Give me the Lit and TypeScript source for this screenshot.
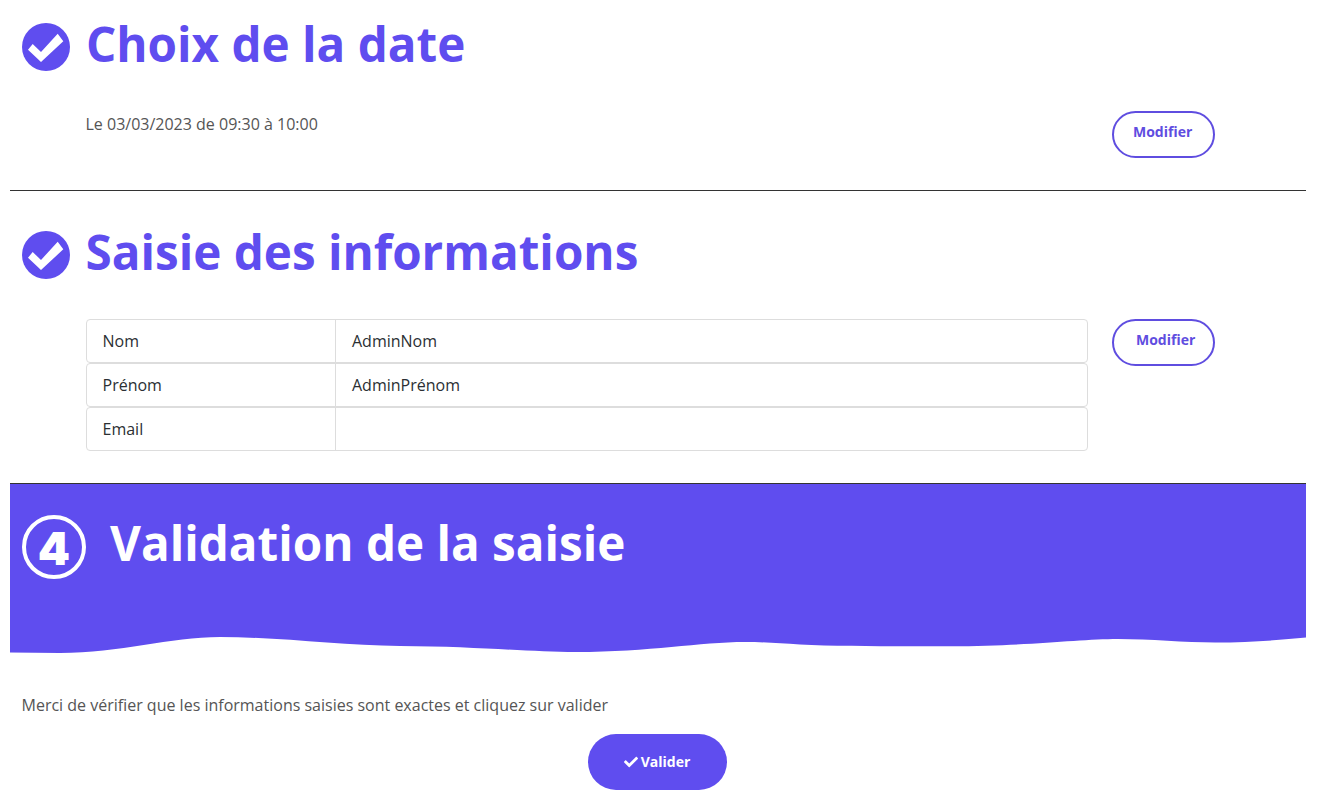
import { LitElement, html, css, svg } from "lit";
import { customElement } from "lit/decorators.js";

const circleCheck = svg`<circle cx="24" cy="24" r="24" fill="#5f4def"/><path fill="#fff" d="M6 26.700L10.700 21L19 29L35.700 10.700L41.300 18.300L19 39Z"/>`;
const check = svg`<path d="M173.898 439.404l-166.4-166.4c-9.997-9.997-9.997-26.206 0-36.204l36.203-36.204c9.997-9.998 26.207-9.998 36.204 0L192 312.69 432.095 72.596c9.997-9.997 26.207-9.997 36.204 0l36.203 36.204c9.997 9.997 9.997 26.206 0 36.204l-294.4 294.401c-9.998 9.997-26.207 9.997-36.204-.001z"/>`;

@customElement("app-root")
export class AppRoot extends LitElement {
  static styles = css`
    :host {
      display: block;
      font-family: "Open Sans", sans-serif;
      color: #2b2f33;
      padding: 0 13px 0 10px;
      background: #fff;
    }
    * { box-sizing: border-box; }
    .head {
      display: flex;
      align-items: flex-start;
      padding-left: 12px;
      gap: 16px;
      color: #5f4def;
    }
    .head svg { width: 48px; height: 48px; display: block; flex: none; }
    h1 { margin: 0; font-size: 47.6px; line-height: 56px; font-weight: 700; }
    .s1 { height: 191px; border-bottom: 1px solid #333; padding-top: 23px; }
    .s1 h1 { margin-top: -7px; }
    .s2 { height: 293px; border-bottom: 1px solid #333; padding-top: 40px; }
    .s2 .head { gap: 15.5px; }
    .s2 h1 { margin-top: -7px; }
    .body {
      display: grid;
      grid-template-columns: 1002px 103px;
      gap: 24px;
      padding-left: 76px;
      align-items: start;
    }
    .s1 .body { margin-top: 40px; }
    .s2 .body { margin-top: 39px; }
    .date { font-size: 16px; line-height: 24px; color: #555; margin-left: -0.5px; }
    .btn {
      display: block;
      width: 103px;
      height: 47px;
      border: 2px solid #5f4de0;
      border-radius: 24px;
      background: #fff;
      color: #5f4de0;
      font: 700 14px/20px "Open Sans", sans-serif;
      padding: 0 0 5px 19px;
      text-align: left;
    }
    .s1 .btn { margin-top: -1px; }
    .btn.second { padding-left: 22px; }
    .rows { display: flex; flex-direction: column; }
    .row {
      display: grid;
      grid-template-columns: 249px 1fr;
      height: 44px;
      border: 1px solid #ddd;
      border-radius: 4px;
      font-size: 16px;
      line-height: 42px;
    }
    .row div { padding-left: 16px; }
    .row div:first-child { border-right: 1px solid #ddd; padding-left: 15.5px; }
    .banner { background: #5f4def; height: 152px; padding: 31px 0 0 12px; color: #fff; display: flex; align-items: flex-start; gap: 24px; }
    .ring {
      width: 64px; height: 64px; flex: none;
      border: 4px solid #fff; border-radius: 50%;
      display: flex; align-items: center; justify-content: center;
      font-family: Inter, sans-serif;
      font-size: 46px; font-weight: 900; line-height: 1;
      padding-top: 2px;
    }
    .banner h1 { line-height: 58px; margin-top: -1px; }
    .wave { display: block; width: 100%; height: 17px; fill: #5f4def; }
    .msg { margin: 40px 0 0 11.5px; font-size: 16px; line-height: 24px; color: #555; }
    .center { display: flex; justify-content: center; margin-top: 17px; padding-right: 2px; }
    .go {
      width: 139px; height: 56px; border: 0; border-radius: 28px;
      background: #5f4def; color: #fff;
      font: 700 14px/20px "Open Sans", sans-serif;
      display: flex; align-items: center; justify-content: center; gap: 3px;
      padding: 0;
    }
    .go svg { width: 14px; height: 14px; fill: #fff; display: block; }
  `;

  render() {
    return html`
      <section class="s1">
        <div class="head">
          <svg viewBox="0 0 48 48">${circleCheck}</svg>
          <h1>Choix de la date</h1>
        </div>
        <div class="body">
          <div class="date">Le 03/03/2023 de 09:30 à 10:00</div>
          <button class="btn">Modifier</button>
        </div>
      </section>
      <section class="s2">
        <div class="head">
          <svg viewBox="0 0 48 48">${circleCheck}</svg>
          <h1>Saisie des informations</h1>
        </div>
        <div class="body">
          <div class="rows">
            <div class="row"><div>Nom</div><div>AdminNom</div></div>
            <div class="row"><div>Prénom</div><div>AdminPrénom</div></div>
            <div class="row"><div>Email</div><div></div></div>
          </div>
          <button class="btn second">Modifier</button>
        </div>
      </section>
      <section class="banner">
        <div class="ring">4</div>
        <h1>Validation de la saisie</h1>
      </section>
      <svg class="wave" viewBox="10 635 1296 17" preserveAspectRatio="none">
        <path d="M10 635H1306V636.500C1280 639 1250 641.500 1215 641.500C1185 641.500 1150 638 1118 638C1080 638 1030 645 950 645.200C900 645.300 840 645.500 800 643.500C780 642.500 765 641 745 641C700 641 650 651 576 651C530 651 480 645.500 400 645C340 644.500 280 636 220 636C170 636 120 652 60 652L10 651.600Z"/>
      </svg>
      <p class="msg">Merci de vérifier que les informations saisies sont exactes et cliquez sur valider</p>
      <div class="center">
        <button class="go"><svg viewBox="0 0 512 512">${check}</svg>Valider</button>
      </div>
    `;
  }
}
